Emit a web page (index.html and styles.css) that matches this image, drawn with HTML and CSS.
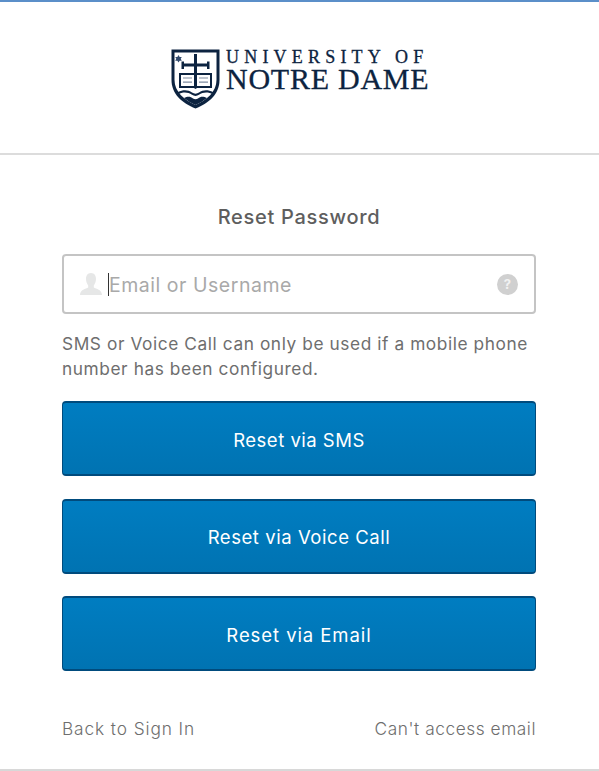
FILE: index.html
```html
<!DOCTYPE html>
<html lang="en">
<head>
<meta charset="utf-8">
<title>Reset Password</title>
<link rel="stylesheet" href="styles.css">
</head>
<body>
<main class="card">
  <header class="brand">
    <div class="logo">
      <svg class="crest" width="49" height="60" viewBox="0 0 49 60" aria-hidden="true">
        <path d="M0.500 0.500H48.500V31C48.500 45 38 54 24.500 59.500C11 54 0.500 45 0.500 31Z" fill="#0c2340"/>
        <path d="M3.500 3.500H45.500V31C45.500 43 35.500 51 24.500 56C13.500 51 3.500 43 3.500 31Z" fill="#fff"/>
        <path d="M23 5H26V14.500H36V12.500H38.500V20H36V17.500H26V25H23V17.500H13V20H10.500V12.500H13V14.500H23Z" fill="#0c2340"/>
        <path d="M7.500 6L8.600 7.900H10.800L9.700 9.800L10.800 11.700H8.600L7.500 13.600L6.400 11.700H4.200L5.300 9.800L4.200 7.900H6.400Z" fill="#31496c"/>
        <path d="M8 24H23.500L24.500 25L25.500 24H41V39H26L24.500 40L23 39H8Z" fill="#0c2340"/>
        <path d="M10 26H23V37H10ZM26 26H39V37H26Z" fill="#fff"/>
        <path d="M12 28.500H21V29.500H12ZM28 28.500H37V29.500H28ZM12 32.500H21V33.800H12ZM28 32.500H37V33.800H28Z" fill="#7f8ca0"/>
        <path d="M7 43C12 40.500 17 40.500 21 43.500C23 45 26 45 28 43.500C32 40.500 37 40.500 42 43V45C37 42.800 32 42.800 28 45.800C26 47.300 23 47.300 21 45.800C17 42.800 12 42.800 7 45Z" fill="#0c2340"/>
        <path d="M13 49C17 47 19.500 47.500 22 49.500C23.500 50.500 25.500 50.500 27 49.500C29.500 47.500 32 47 36 49C32.500 52 28.500 54 24.500 56C20.500 54 16.500 52 13 49Z" fill="#0c2340"/>
      </svg>
      <div class="wordmark">
        <span class="wordmark-top">UNIVERSITY OF</span>
        <span class="wordmark-main">NOTRE DAME</span>
      </div>
    </div>
  </header>
  <section class="content">
    <h1 class="title">Reset Password</h1>
    <div class="field">
      <svg class="user-icon" width="24" height="24" viewBox="0 0 24 24" aria-hidden="true">
        <path d="M12 1C15.500 1 17 3.800 17 7C17 10 15.800 12 14.800 13.500V15.500C17 17 23 17.500 23 23H1C1 17.500 7 17 9.200 15.500V13.500C8.200 12 7 10 7 7C7 3.800 8.500 1 12 1Z" fill="#e6e7e7"/>
      </svg>
      <span class="caret"></span>
      <span class="placeholder">Email or Username</span>
      <span class="help">?</span>
    </div>
    <p class="note">SMS or Voice Call can only be used if a mobile phone number has been configured.</p>
    <div class="actions">
      <a class="button">Reset via SMS</a>
      <a class="button button-voice">Reset via Voice Call</a>
      <a class="button button-email">Reset via Email</a>
    </div>
    <nav class="links">
      <a class="link link-back">Back to Sign In</a>
      <a class="link link-help">Can't access email</a>
    </nav>
  </section>
</main>
</body>
</html>
```

FILE: styles.css
```css
* {
  box-sizing: border-box;
}

html,
body {
  margin: 0;
  padding: 0;
  background: #fff;
}

body {
  font-family: "Inter", "Open Sans", sans-serif;
  color: #5e5e5e;
}

.card {
  width: 599px;
  height: 771px;
  display: flex;
  flex-direction: column;
  border-top: 2px solid #5b8fc9;
  border-bottom: 2px solid #d8d8d8;
}

.brand {
  height: 153px;
  flex: none;
  display: flex;
  justify-content: flex-start;
  padding: 47px 0 0 171px;
  border-bottom: 2px solid #dcdcdc;
}

.logo {
  display: flex;
  align-items: flex-start;
  gap: 6px;
  height: 62px;
}

.crest {
  display: block;
  flex: none;
}

.wordmark {
  display: flex;
  flex-direction: column;
  margin-top: -1px;
  font-family: "Liberation Serif", serif;
  color: #0c2340;
  white-space: nowrap;
  -webkit-text-stroke: 0.3px #0c2340;
}

.wordmark-top {
  font-size: 18px;
  line-height: 18px;
  letter-spacing: 5.200px;
}

.wordmark-main {
  font-size: 30px;
  line-height: 25px;
  letter-spacing: 0.750px;
}

.content {
  flex: 1;
  display: flex;
  flex-direction: column;
  padding: 49px 63px 0 62px;
}

.title {
  margin: 0;
  font-size: 20px;
  line-height: 26px;
  font-weight: 500;
  letter-spacing: 0.700px;
  text-align: center;
  color: #5e5e5e;
}

.field {
  margin-top: 24px;
  height: 60px;
  display: flex;
  align-items: center;
  padding: 0 16px 0 15px;
  border: 2px solid #c4c4c4;
  border-radius: 4px;
}

.user-icon {
  flex: none;
  display: block;
  margin-right: 5px;
}

.caret {
  flex: none;
  width: 1px;
  height: 23px;
  background: #333;
}

.placeholder {
  flex: 1;
  padding-top: 2px;
  font-size: 19.500px;
  letter-spacing: 0.530px;
  color: #a9a9a9;
}

.help {
  flex: none;
  width: 21px;
  height: 21px;
  border-radius: 50%;
  background: #d0d0d0;
  color: #f2f2f2;
  font-size: 13px;
  font-weight: 700;
  line-height: 21px;
  text-align: center;
}

.note {
  margin: 17px 0 0;
  font-size: 17.300px;
  line-height: 25px;
  letter-spacing: 0.580px;
  color: #6e6e6e;
}

.actions {
  margin-top: 20px;
  display: flex;
  flex-direction: column;
  gap: 23px;
}

.button {
  height: 75px;
  display: flex;
  align-items: center;
  justify-content: center;
  padding-top: 2px;
  border: 1px solid #004b7d;
  border-top-width: 2px;
  border-bottom-width: 2px;
  border-radius: 4px;
  background: linear-gradient(#007dc1, #0073b2);
  color: #fff;
  font-size: 18.500px;
  font-weight: 400;
  letter-spacing: 0.500px;
}

.button-voice {
  padding-top: 0;
  letter-spacing: 0.560px;
}

.button-email {
  margin-top: -1px;
  letter-spacing: 0.930px;
}

.links {
  margin-top: 46px;
  display: flex;
  justify-content: space-between;
  font-size: 17.300px;
  line-height: 24px;
  font-weight: 300;
  color: #6e6e6e;
}

.link-back {
  letter-spacing: 0.900px;
}

.link-help {
  letter-spacing: 0.550px;
}
```
